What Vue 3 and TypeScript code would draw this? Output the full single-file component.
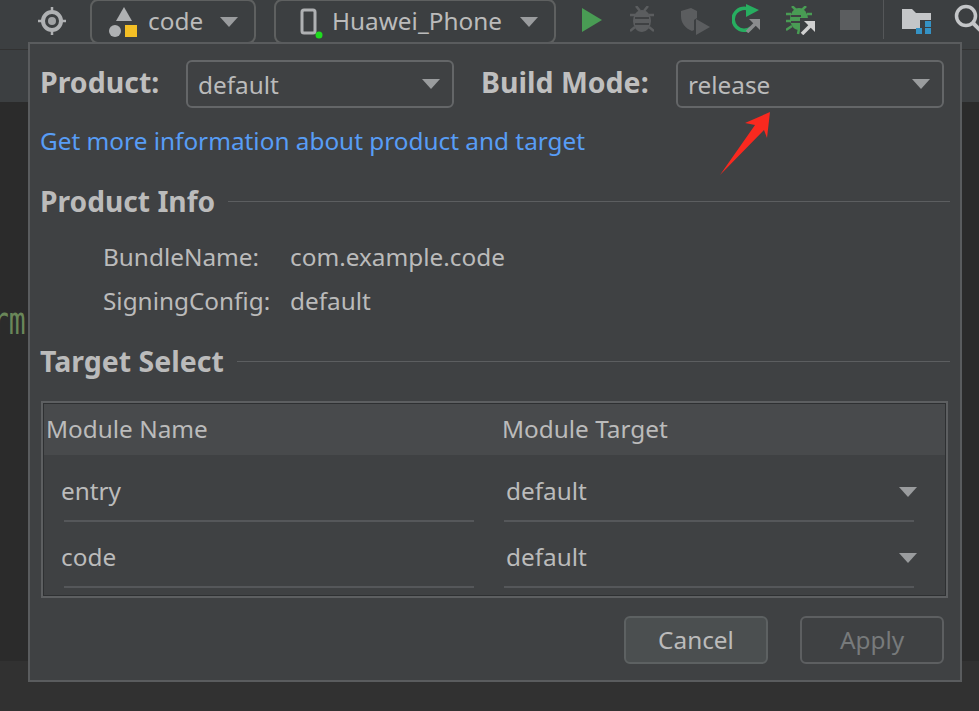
<script setup lang="ts">
interface Row { name: string; target: string }
const rows: Row[] = [
  { name: 'entry', target: 'default' },
  { name: 'code', target: 'default' },
]
</script>

<template>
  <div class="page">
    <header class="toolbar">
      <svg class="target" width="30" height="30" viewBox="0 0 30 30">
        <circle cx="15" cy="15" r="9" fill="none" stroke="#afb1b3" stroke-width="4" />
        <circle cx="15" cy="15" r="4" fill="#a0a2a4" />
        <path d="M15 1v4M15 25v4M1 15h4M25 15h4" stroke="#afb1b3" stroke-width="2.5" />
      </svg>
      <div class="tool-select code-select">
        <svg width="32" height="34" viewBox="0 0 32 34">
          <path d="M16 0l8 14H8z" fill="#afb1b3" />
          <circle cx="7" cy="24" r="6" fill="#afb1b3" />
          <rect x="17" y="18" width="12" height="12" fill="#f4bf25" />
        </svg>
        <span>code</span>
        <i class="caret tool-caret"></i>
      </div>
      <div class="tool-select phone-select">
        <svg width="28" height="32" viewBox="0 0 28 32">
          <rect x="3" y="2" width="13" height="23" rx="2" fill="none" stroke="#afb1b3" stroke-width="3" />
          <circle cx="20" cy="27" r="3.5" fill="#1fdc1f" />
        </svg>
        <span>Huawei_Phone</span>
        <i class="caret tool-caret"></i>
      </div>
      <div class="actions">
        <svg class="a-run" width="20" height="24" viewBox="0 0 20 24"><path d="M0 0l20 12L0 24z" fill="#499c54" /></svg>
        <svg class="a-bug" width="24" height="27" viewBox="0 0 24 27">
          <ellipse cx="12" cy="15" rx="9" ry="11" fill="#5b5d5f" />
          <path d="M6 0l4 5M18 0l-4 5M0 9h5M24 9h-5M0 25l5-4M24 25l-5-4" stroke="#5b5d5f" stroke-width="2.5" />
          <path d="M5 12h14M5 18h14" stroke="#3f4143" stroke-width="2" />
        </svg>
        <svg class="a-shield" width="30" height="27" viewBox="0 0 30 27" fill="#5b5d5f">
          <path d="M1 3l10-3 6 3v7l-3 2v10l-2 1C5 20 1 15 1 8z" />
          <path d="M16 11l14 8-14 8z" />
        </svg>
        <svg class="a-rerun" width="28" height="29" viewBox="0 0 28 29" fill="none">
          <path d="M19 24a11 11 0 1 1-1-18" stroke="#27ae60" stroke-width="3.5" />
          <path d="M14 0l13 6-13 7z" fill="#27ae60" />
          <path d="M15 28l8-8" stroke="#8a8c8e" stroke-width="3.5" />
          <path d="M17 15h11v11z" fill="#8a8c8e" />
        </svg>
        <svg class="a-debug" width="29" height="29" viewBox="0 0 29 29">
          <ellipse cx="13" cy="13" rx="9" ry="11" fill="#499c54" />
          <path d="M6 0l5 5M20 0l-5 5M0 8h5M26 8h-5M0 15h5M0 24l6-4M12 28l1-5" stroke="#499c54" stroke-width="2.5" />
          <path d="M5 10h10M5 16h10" stroke="#3f4143" stroke-width="2" />
          <path d="M14 12h15v17H14z" fill="#3c3f41" />
          <path d="M16 28l8-8" stroke="#d0d0d0" stroke-width="3.5" />
          <path d="M18 15h11v11z" fill="#d0d0d0" />
        </svg>
        <span class="stop"></span>
      </div>
      <span class="divider"></span>
      <svg class="folder" width="29" height="25" viewBox="0 0 29 25">
        <path d="M0 0h10l4 4h15v7H18v9H0z" fill="#c4c6c8" />
        <path d="M23 12h6v6h-6zM14 19h6v6h-6zM23 19h6v6h-6z" fill="#3592c4" />
      </svg>
      <svg class="search" width="30" height="30" viewBox="0 0 30 30" fill="none">
        <circle cx="12" cy="12" r="9.5" stroke="#c4c6c8" stroke-width="3.5" />
        <path d="M19 19l9 9" stroke="#c4c6c8" stroke-width="4" />
      </svg>
    </header>

    <div class="subbar"></div>

    <main class="editor">
      <code class="code-frag">rm</code>
    </main>

    <footer class="statusbar"></footer>

    <section class="dialog">
      <div class="mode-row">
        <label class="strong">Product:</label>
        <div class="select">
          <span>default</span>
          <i class="caret"></i>
        </div>
        <label class="strong build">Build Mode:</label>
        <div class="select">
          <span>release</span>
          <i class="caret"></i>
        </div>
      </div>

      <a class="link">Get more information about product and target</a>

      <div class="heading info-heading">
        <span>Product Info</span>
        <hr />
      </div>
      <dl class="info">
        <dt>BundleName:</dt>
        <dd>com.example.code</dd>
        <dt>SigningConfig:</dt>
        <dd>default</dd>
      </dl>

      <div class="heading target-heading">
        <span>Target Select</span>
        <hr />
      </div>

      <div class="table">
        <div class="thead">
          <span class="col-a">Module Name</span>
          <span class="col-b">Module Target</span>
        </div>
        <div v-for="row in rows" :key="row.name" class="trow">
          <div class="cell cell-a"><span>{{ row.name }}</span></div>
          <div class="cell cell-b">
            <span>{{ row.target }}</span>
            <i class="caret"></i>
          </div>
        </div>
      </div>

      <div class="buttons">
        <button class="btn cancel" type="button">Cancel</button>
        <button class="btn apply" type="button">Apply</button>
      </div>

      <svg class="arrow" width="54" height="68" viewBox="0 0 54 68">
        <path d="M52 2L49 28 46 20 2 65 37 15 27 13z" fill="#f9291f" />
      </svg>
    </section>
  </div>
</template>

<style>
html, body { margin: 0; background: #2b2b2b; }
</style>

<style scoped>
.page {
  position: relative;
  width: 979px;
  height: 711px;
  overflow: hidden;
  display: flex;
  flex-direction: column;
  background: #3c3f41;
  color: #bbbbbb;
  font-family: "Noto Sans", "Open Sans", sans-serif;
  font-size: 24.35px;
}
.toolbar {
  height: 49px;
  flex: none;
  display: flex;
  align-items: flex-start;
  border-bottom: 1px solid #323232;
  box-sizing: content-box;
  padding-left: 37px;
}
.toolbar > * { flex: none; }
.target { margin: 6px 23px 0 0; }
.tool-select {
  height: 41px;
  margin-top: -1px;
  box-sizing: content-box;
  border: 2px solid #5e6060;
  border-radius: 8px;
  display: flex;
  align-items: center;
  line-height: 1;
}
.code-select { width: 162px; margin-right: 18px; }
.code-select svg { margin: 4px 8px 0 16px; }
.phone-select { width: 278px; margin-right: 26px; }
.phone-select svg { margin: 4px 5px 0 23px; }
.tool-select span { white-space: nowrap; }
.caret {
  display: block;
  width: 0;
  height: 0;
  border-left: 9px solid transparent;
  border-right: 9px solid transparent;
  border-top: 10px solid #9a9c9e;
}
.tool-caret { margin-left: auto; margin-right: 16px; }
.actions { display: flex; align-items: flex-start; width: 278px; }
.actions > * { flex: none; }
.a-run { margin-top: 8px; }
.a-bug { margin: 6px 0 0 28px; }
.a-shield { margin: 8px 0 0 26px; }
.a-rerun { margin: 4px 0 0 22px; }
.a-debug { margin: 6px 0 0 26px; }
.stop { width: 20px; height: 20px; background: #5b5d5f; margin: 10px 0 0 25px; }
.divider { width: 1px; height: 39px; background: #555759; margin-left: 23px; margin-right: 18px; }
.folder { margin: 9px 0 0 0; }
.search { margin: 4px 0 0 23px; }

.subbar { height: 52px; flex: none; background: #3c3f41; }
.editor { flex: 1; background: #2b2b2b; }
.code-frag {
  display: block;
  padding-top: 205px;
  margin-left: -8px;
  font-family: "DejaVu Sans Mono", monospace;
  font-size: 28px;
  line-height: 32px;
  color: #6a8759;
  transform: scaleY(1.3);
  transform-origin: 0 223px;
}
.statusbar { height: 50px; flex: none; background: #313131; }

.dialog {
  position: absolute;
  left: 28px;
  top: 42px;
  width: 934px;
  height: 640px;
  box-sizing: border-box;
  border: 2px solid #5a5c5e;
  background: #3f4143;
  padding: 16px 0 0 10px;
  display: flex;
  flex-direction: column;
}
.mode-row { display: flex; align-items: center; height: 48px; }
.strong { font-weight: 700; font-size: 28.5px; color: #bfbfbf; line-height: 1; padding-bottom: 4px; white-space: nowrap; }
.mode-row .strong:first-child { width: 146px; }
.build { width: 195px; margin-left: 27px; }
.select {
  width: 268px;
  height: 48px;
  box-sizing: border-box;
  border: 2px solid #646668;
  border-radius: 6px;
  padding: 0 12px 0 10px;
  display: flex;
  align-items: center;
  justify-content: space-between;
}
.link { margin-top: 15px; color: #589df6; line-height: 36px; }
.heading {
  display: flex;
  align-items: center;
  gap: 13px;
  font-weight: 700;
  font-size: 28.2px;
  line-height: 36px;
  margin-right: 10px;
}
.heading hr { flex: 1; height: 1px; margin: 0; border: 0; background: #5c5e60; }
.info-heading { margin-top: 24px; }
.target-heading { margin-top: 21px; font-size: 28.5px; }
.info {
  margin: 16px 0 0 63px;
  display: grid;
  grid-template-columns: 187px 1fr;
  grid-auto-rows: 43.5px;
  align-items: center;
}
.info dt, .info dd { margin: 0; line-height: 43.5px; }
.table {
  margin: 22px 0 0 1px;
  width: 907px;
  height: 197px;
  box-sizing: border-box;
  border: 2px solid #5d5f61;
  outline: 1px solid #2e3032;
  outline-offset: -3px;
  display: flex;
  flex-direction: column;
  padding-left: 1px;
}
.thead {
  height: 52px;
  flex: none;
  box-sizing: border-box;
  background: #484a4c;
  display: flex;
  align-items: center;
  padding: 0 0 2px 2px;
  margin-bottom: 1px;
}
.col-a { width: 456px; }
.trow { height: 66px; flex: none; display: flex; padding-left: 20px; }
.cell { height: 66px; box-sizing: border-box; border-bottom: 2px solid #55575a; display: flex; align-items: center; padding-top: 4px; }
.cell-a { width: 410px; margin-right: 30px; }
.cell-a span { margin-left: -3px; }
.cell-b { width: 410px; justify-content: space-between; padding-left: 2px; }
.cell-b .caret { margin: 4px -3px 0 0; }
.buttons {
  position: absolute;
  right: 16px;
  bottom: 16px;
  display: flex;
  gap: 32px;
}
.btn {
  width: 144px;
  height: 48px;
  border-radius: 6px;
  font: inherit;
  line-height: 1;
  padding: 0;
  box-sizing: border-box;
}
.cancel { background: #4b4f50; border: 2px solid #5d6162; color: #bbbbbb; }
.apply { background: transparent; border: 2px solid #5d5f61; color: #777a7b; }
.arrow { position: absolute; left: 688px; top: 66px; }
</style>
